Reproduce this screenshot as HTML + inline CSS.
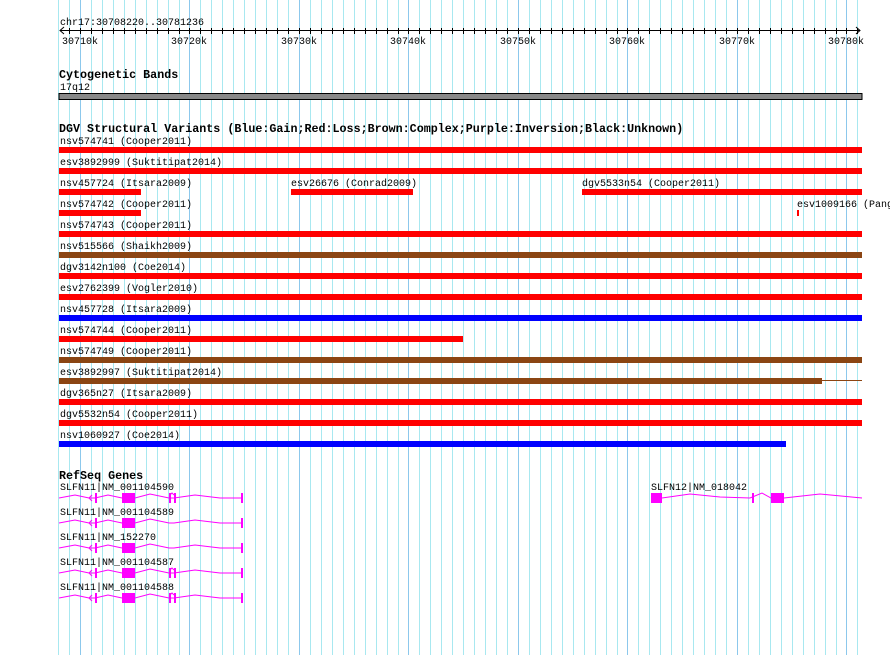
<!DOCTYPE html>
<html><head><meta charset="utf-8"><style>
html,body{margin:0;padding:0;background:#fff;width:890px;height:655px;overflow:hidden}
svg{display:block}
text{font-family:"Liberation Mono","DejaVu Sans Mono",monospace;font-size:10px;fill:#000}
.b{font-weight:bold;font-size:11.7px}
</style></head><body>
<svg width="890" height="655" xmlns="http://www.w3.org/2000/svg">
<path stroke="#a8e8f0" stroke-width="1" fill="none" d="M58.5 0V655M69.5 0V655M91.5 0V655M102.5 0V655M113.5 0V655M124.5 0V655M135.5 0V655M146.5 0V655M157.5 0V655M168.5 0V655M179.5 0V655M200.5 0V655M211.5 0V655M222.5 0V655M233.5 0V655M244.5 0V655M255.5 0V655M266.5 0V655M277.5 0V655M288.5 0V655M310.5 0V655M321.5 0V655M332.5 0V655M343.5 0V655M354.5 0V655M365.5 0V655M376.5 0V655M387.5 0V655M398.5 0V655M419.5 0V655M430.5 0V655M441.5 0V655M452.5 0V655M463.5 0V655M474.5 0V655M485.5 0V655M496.5 0V655M507.5 0V655M529.5 0V655M540.5 0V655M551.5 0V655M562.5 0V655M573.5 0V655M584.5 0V655M595.5 0V655M606.5 0V655M617.5 0V655M638.5 0V655M649.5 0V655M660.5 0V655M671.5 0V655M682.5 0V655M693.5 0V655M704.5 0V655M715.5 0V655M726.5 0V655M748.5 0V655M759.5 0V655M770.5 0V655M781.5 0V655M792.5 0V655M803.5 0V655M814.5 0V655M825.5 0V655M836.5 0V655M857.5 0V655"/>
<path stroke="#8cc8ec" stroke-width="1" fill="none" d="M80.5 0V655M189.5 0V655M299.5 0V655M408.5 0V655M518.5 0V655M627.5 0V655M737.5 0V655M846.5 0V655"/>
<path stroke="#000" stroke-width="1" fill="none" d="M69.5 28V34M80.5 28V34M91.5 28V34M102.5 28V34M113.5 28V34M124.5 28V34M135.5 28V34M146.5 28V34M157.5 28V34M168.5 28V34M179.5 28V34M189.5 28V34M200.5 28V34M211.5 28V34M222.5 28V34M233.5 28V34M244.5 28V34M255.5 28V34M266.5 28V34M277.5 28V34M288.5 28V34M299.5 28V34M310.5 28V34M321.5 28V34M332.5 28V34M343.5 28V34M354.5 28V34M365.5 28V34M376.5 28V34M387.5 28V34M398.5 28V34M408.5 28V34M419.5 28V34M430.5 28V34M441.5 28V34M452.5 28V34M463.5 28V34M474.5 28V34M485.5 28V34M496.5 28V34M507.5 28V34M518.5 28V34M529.5 28V34M540.5 28V34M551.5 28V34M562.5 28V34M573.5 28V34M584.5 28V34M595.5 28V34M606.5 28V34M617.5 28V34M627.5 28V34M638.5 28V34M649.5 28V34M660.5 28V34M671.5 28V34M682.5 28V34M693.5 28V34M704.5 28V34M715.5 28V34M726.5 28V34M737.5 28V34M748.5 28V34M759.5 28V34M770.5 28V34M781.5 28V34M792.5 28V34M803.5 28V34M814.5 28V34M825.5 28V34M836.5 28V34M846.5 28V34M857.5 28V34"/>
<text x="60" y="25">chr17:30708220..30781236</text>
<line x1="60" y1="30.5" x2="860" y2="30.5" stroke="#000"/>
<polyline points="64,27 60,30.5 64,34" fill="none" stroke="#000"/>
<polyline points="856,27 860,30.5 856,34" fill="none" stroke="#000"/>
<text x="62" y="44">30710k</text><text x="171" y="44">30720k</text><text x="281" y="44">30730k</text><text x="390" y="44">30740k</text><text x="500" y="44">30750k</text><text x="609" y="44">30760k</text><text x="719" y="44">30770k</text><text x="828" y="44">30780k</text>
<text class="b" x="59" y="78">Cytogenetic Bands</text>
<text x="60" y="90">17q12</text>
<rect x="59" y="93.5" width="803" height="6" fill="#888" stroke="#000" stroke-width="1"/>
<text class="b" x="59" y="132">DGV Structural Variants (Blue:Gain;Red:Loss;Brown:Complex;Purple:Inversion;Black:Unknown)</text>
<g>
<text x="60" y="144">nsv574741 (Cooper2011)</text><rect x="59" y="147" width="803" height="6" fill="#f00"/>
<text x="60" y="165">esv3892999 (Suktitipat2014)</text><rect x="59" y="168" width="803" height="6" fill="#f00"/>
<text x="60" y="186">nsv457724 (Itsara2009)</text><rect x="59" y="189" width="82" height="6" fill="#f00"/>
<text x="291" y="186">esv26676 (Conrad2009)</text><rect x="291" y="189" width="122" height="6" fill="#f00"/>
<text x="582" y="186">dgv5533n54 (Cooper2011)</text><rect x="582" y="189" width="280" height="6" fill="#f00"/>
<text x="60" y="207">nsv574742 (Cooper2011)</text><rect x="59" y="210" width="82" height="6" fill="#f00"/>
<text x="797" y="207">esv1009166 (Pang</text><rect x="797" y="210" width="2" height="6" fill="#f00"/>
<text x="60" y="228">nsv574743 (Cooper2011)</text><rect x="59" y="231" width="803" height="6" fill="#f00"/>
<text x="60" y="249">nsv515566 (Shaikh2009)</text><rect x="59" y="252" width="803" height="6" fill="#8b4513"/>
<text x="60" y="270">dgv3142n100 (Coe2014)</text><rect x="59" y="273" width="803" height="6" fill="#f00"/>
<text x="60" y="291">esv2762399 (Vogler2010)</text><rect x="59" y="294" width="803" height="6" fill="#f00"/>
<text x="60" y="312">nsv457728 (Itsara2009)</text><rect x="59" y="315" width="803" height="6" fill="#00f"/>
<text x="60" y="333">nsv574744 (Cooper2011)</text><rect x="59" y="336" width="404" height="6" fill="#f00"/>
<text x="60" y="354">nsv574749 (Cooper2011)</text><rect x="59" y="357" width="803" height="6" fill="#8b4513"/>
<text x="60" y="375">esv3892997 (Suktitipat2014)</text><rect x="59" y="378" width="763" height="6" fill="#8b4513"/><rect x="822" y="380" width="40" height="1" fill="#8b4513"/>
<text x="60" y="396">dgv365n27 (Itsara2009)</text><rect x="59" y="399" width="803" height="6" fill="#f00"/>
<text x="60" y="417">dgv5532n54 (Cooper2011)</text><rect x="59" y="420" width="803" height="6" fill="#f00"/>
<text x="60" y="438">nsv1060927 (Coe2014)</text><rect x="59" y="441" width="727" height="6" fill="#00f"/>
</g>
<text class="b" x="59" y="479">RefSeq Genes</text>
<defs>
<g id="gA">
<polyline points="59,498 75,495 89,498 95,498 108,495 122,498 135,498 150,494 169,498 174,498 195,495 220,498 242,498" fill="none" stroke="#f0f" stroke-width="1"/>
<polyline points="92,495 89,498 92,501" fill="none" stroke="#f0f"/>
<rect x="95" y="493" width="2" height="10" fill="#f0f"/>
<rect x="122" y="493" width="13" height="10" fill="#f0f"/>
<rect x="241" y="493" width="2" height="10" fill="#f0f"/>
</g>
<g id="gB"><rect x="169" y="493" width="2" height="10" fill="#f0f"/><rect x="174" y="493" width="2" height="10" fill="#f0f"/><polyline points="170,495 172,493 174,495" fill="none" stroke="#f0f"/></g>
</defs>
<text x="60" y="490">SLFN11|NM_001104590</text><use href="#gA"/><use href="#gB"/>
<text x="60" y="515">SLFN11|NM_001104589</text><use href="#gA" y="25"/>
<text x="60" y="540">SLFN11|NM_152270</text><use href="#gA" y="50"/>
<text x="60" y="565">SLFN11|NM_001104587</text><use href="#gA" y="75"/><use href="#gB" y="75"/>
<text x="60" y="590">SLFN11|NM_001104588</text><use href="#gA" y="100"/><use href="#gB" y="100"/>
<text x="651" y="490">SLFN12|NM_018042</text>
<polyline points="662,498 690,494 720,497 750,498 762,493 771,498 784,498 820,494 862,498" fill="none" stroke="#f0f"/>
<rect x="651" y="493" width="11" height="10" fill="#f0f"/>
<rect x="752" y="493" width="2" height="10" fill="#f0f"/>
<rect x="771" y="493" width="13" height="10" fill="#f0f"/>
</svg>
</body></html>
